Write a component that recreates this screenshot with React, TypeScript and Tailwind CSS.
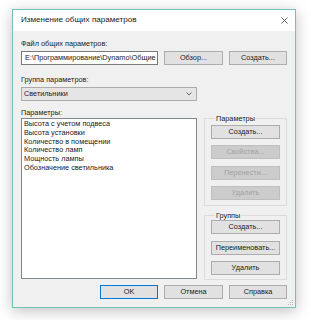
import React from "react";

const font = { fontFamily: '"Liberation Sans", Arial, sans-serif' };

const items = [
  "Высота с учетом подвеса",
  "Высота установки",
  "Количество в помещении",
  "Количество ламп",
  "Мощность лампы",
  "Обозначение светильника",
];

const Btn = ({
  label,
  disabled,
  focused,
  className = "",
}: {
  label: string;
  disabled?: boolean;
  focused?: boolean;
  className?: string;
}) => (
  <div
    className={`h-[14px] flex items-center justify-center text-[7.3px] leading-none border ${
      disabled
        ? "bg-[#cccccc] border-[#bfbfbf] text-[#a3a3a3]"
        : focused
        ? "bg-[#e1e1e1] border-[#0078d7] text-[#222]"
        : "bg-[#e1e1e1] border-[#adadad] text-[#222]"
    } ${className}`}
  >
    {label}
  </div>
);

export default function App() {
  return (
    <div className="w-[311px] h-[320px] bg-white overflow-hidden pt-[9px] pl-[12px]" style={font}>
      <div className="relative w-[284px] h-[299px] border border-[#70c2bb] bg-[#f0f0f0] flex flex-col shadow-[0_3px_14px_rgba(0,0,0,0.25)]">
        {/* заголовок окна */}
        <div className="h-[21px] bg-white flex items-center pl-[8px] pr-[7px]">
          <span className="text-[8.1px] text-[#222]">Изменение общих параметров</span>
          <svg className="ml-auto" width="7" height="7" viewBox="0 0 7 7">
            <path d="M0.5 0.5 L6.5 6.5 M6.5 0.5 L0.5 6.5" stroke="#555" strokeWidth="0.9" />
          </svg>
        </div>

        {/* содержимое */}
        <div className="flex-1 flex flex-col pl-[8px] pr-[8px] pt-[8px] text-[7.3px] text-[#222]">
          <div className="h-[9px] leading-[9px]">Файл общих параметров:</div>
          <div className="mt-[3px] h-[14px] flex gap-[6px]">
            <div className="w-[137px] h-[14px] bg-white border border-[#7a7a7a] pl-[3px] flex items-center overflow-hidden whitespace-nowrap leading-none">
              E:\Программирование\Dynamo\Общие г
            </div>
            <Btn label="Обзор..." className="w-[59px]" />
            <Btn label="Создать..." className="w-[58px]" />
          </div>

          <div className="mt-[10px] h-[9px] leading-[9px]">Группа параметров:</div>
          <div className="mt-[3px] w-[176px] h-[14px] bg-[#e5e5e5] border border-[#acacac] flex items-center pl-[2px] pr-[4px] leading-none">
            <span>Светильники</span>
            <svg className="ml-auto" width="6" height="4" viewBox="0 0 6 4">
              <path d="M0.5 0.5 L3 3 L5.5 0.5" stroke="#444" strokeWidth="0.8" fill="none" />
            </svg>
          </div>

          <div className="mt-[7px] flex gap-[7px] h-[171px]">
            <div className="w-[176px] flex flex-col">
              <div className="h-[9px] leading-[9px]">Параметры:</div>
              <div className="mt-[1px] flex-1 bg-white border border-[#828790] pt-[1px] pl-[2px]">
                {items.map((t) => (
                  <div key={t} className="h-[8.8px] leading-[8.8px] whitespace-nowrap">
                    {t}
                  </div>
                ))}
              </div>
            </div>

            <div className="w-[83px] pt-[6px] flex flex-col">
              <fieldset className="border border-[#dcdcdc] px-[6px] pb-[5px]">
                <legend className="ml-[4px] px-[1px] h-[9px] leading-[9px]">Параметры</legend>
                <div className="mt-[1.5px] flex flex-col gap-[6.5px]">
                  <Btn label="Создать..." />
                  <Btn label="Свойства..." disabled />
                  <Btn label="Перенести..." disabled />
                  <Btn label="Удалить" disabled />
                </div>
              </fieldset>
              <fieldset className="mt-[4.5px] border border-[#dcdcdc] px-[6px] pb-[4px]">
                <legend className="ml-[4px] px-[1px] h-[9px] leading-[9px]">Группы</legend>
                <div className="mt-[0.5px] flex flex-col gap-[6.5px]">
                  <Btn label="Создать..." />
                  <Btn label="Переименовать..." />
                  <Btn label="Удалить" />
                </div>
              </fieldset>
            </div>
          </div>

          <div className="mt-[6px] flex justify-end gap-[6px]">
            <Btn label="OK" focused className="w-[58px]" />
            <Btn label="Отмена" className="w-[59px]" />
            <Btn label="Справка" className="w-[58px]" />
          </div>
        </div>

        {/* уголок изменения размера */}
        <svg className="absolute right-[1px] bottom-[1px]" width="6" height="6" viewBox="0 0 6 6">
          <rect x="4" y="0" width="1" height="1" fill="#bbb" />
          <rect x="2" y="2" width="1" height="1" fill="#bbb" />
          <rect x="4" y="2" width="1" height="1" fill="#bbb" />
          <rect x="0" y="4" width="1" height="1" fill="#bbb" />
          <rect x="2" y="4" width="1" height="1" fill="#bbb" />
          <rect x="4" y="4" width="1" height="1" fill="#bbb" />
        </svg>
      </div>
    </div>
  );
}
